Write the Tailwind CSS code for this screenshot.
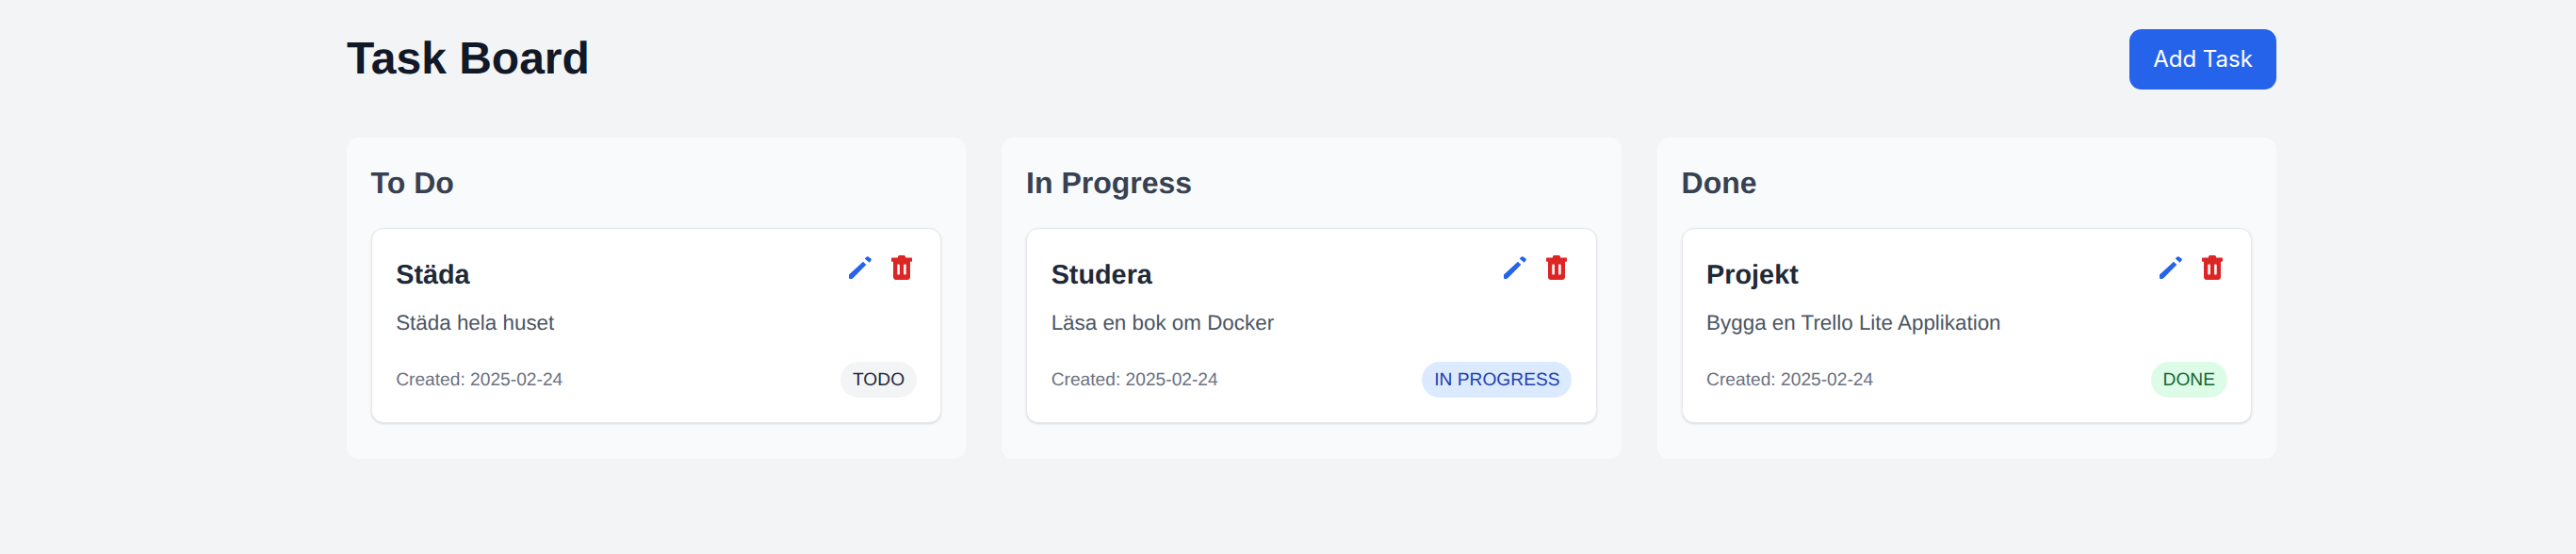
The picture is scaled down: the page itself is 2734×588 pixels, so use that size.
<!DOCTYPE html>
<html lang="sv">
<head>
  <meta charset="UTF-8" />
  <title>Task Board</title>
  <script src="https://cdn.jsdelivr.net/npm/@tailwindcss/browser@4"></script>
</head>
<body class="min-h-screen bg-[#f3f4f6] font-['Liberation_Sans',sans-serif] [text-rendering:geometricPrecision]">
  <div class="ml-[368px] w-[2048px] pt-[31px]">

    <!-- Header -->
    <header class="flex justify-between items-center h-16 mb-[51px]">
      <h1 class="text-[48px] leading-[56px] font-bold text-[#111827]">Task Board</h1>
      <button class="w-[156px] h-16 rounded-[12.8px] bg-[#2563eb] text-white text-[24px] font-['Inter',sans-serif]">Add Task</button>
    </header>

    <!-- Columns -->
    <main class="grid grid-cols-3 gap-[38.4px]">

      <section class="bg-[#f9fafb] rounded-[12.8px] p-[25.6px] pb-[38.4px]">
        <h2 class="text-[32px] leading-[44.8px] font-bold text-[#374151] mb-[25.6px]">To Do</h2>
        <article class="bg-white border border-[#e5e7eb] rounded-[12.8px] shadow-sm p-[25.6px]">
          <div class="flex justify-between items-start">
            <h3 class="text-[28.8px] leading-[44.8px] pt-[1px] font-bold text-[#1f2937]">Städa</h3>
            <div class="flex gap-[21px] pt-[2px] mr-[5px]">
              <svg class="w-[24px] h-[24px] mt-[1px] text-[#2563eb]" viewBox="0 0 24 24" fill="currentColor"><path d="M0 19.500 15 5.700 18.300 9 4.500 23Q3.800 24 2.500 24H1Q0 24 0 23Z" /><path d="M16.700 2.400 18.500.7Q19.500-.2 20.700.6L23.400 2.600Q24.300 3.500 23.400 4.600L21.700 6.700Z" /></svg>
              <svg class="w-[22px] h-[26px] text-[#dc2626]" viewBox="0 0 22 26" fill="currentColor"><path fill-rule="evenodd" d="M8.500 0h5c.9 0 1.500.8 1.700 2.400H21c.6 0 1 .4 1 1V6c0 .4-.3.7-.7.700H20V23c0 1.700-1.300 3-3 3H5c-1.700 0-3-1.300-3-3V6.700H.7C.3 6.700 0 6.400 0 6V3.400c0-.6.4-1 1-1h5.800C7 .8 7.600 0 8.500 0ZM7.300 9.500c-.6 0-1 .4-1 1V19.500c0 .6.4 1 1 1h.6c.6 0 1-.4 1-1V10.500c0-.6-.4-1-1-1h-.6Zm6.800 0c-.6 0-1 .4-1 1V19.500c0 .6.4 1 1 1h.6c.6 0 1-.4 1-1V10.500c0-.6-.4-1-1-1h-.6Z" /></svg>
            </div>
          </div>
          <p class="text-[22.4px] leading-[32px] text-[#4b5563] mt-[12.8px]">Städa hela huset</p>
          <div class="flex justify-between items-center mt-[24.6px]">
            <span class="text-[19.2px] pt-[3px] text-[#6b7280]">Created: 2025-02-24</span>
            <span class="h-[38.4px] flex items-center px-[12.8px] pt-[2px] rounded-full text-[19.2px] bg-[#f3f4f6] text-[#1f2937]">TODO</span>
          </div>
        </article>
      </section>

      <section class="bg-[#f9fafb] rounded-[12.8px] p-[25.6px] pb-[38.4px]">
        <h2 class="text-[32px] leading-[44.8px] font-bold text-[#374151] mb-[25.6px]">In Progress</h2>
        <article class="bg-white border border-[#e5e7eb] rounded-[12.8px] shadow-sm p-[25.6px]">
          <div class="flex justify-between items-start">
            <h3 class="text-[28.8px] leading-[44.8px] pt-[1px] font-bold text-[#1f2937]">Studera</h3>
            <div class="flex gap-[21px] pt-[2px] mr-[5px]">
              <svg class="w-[24px] h-[24px] mt-[1px] text-[#2563eb]" viewBox="0 0 24 24" fill="currentColor"><path d="M0 19.500 15 5.700 18.300 9 4.500 23Q3.800 24 2.500 24H1Q0 24 0 23Z" /><path d="M16.700 2.400 18.500.7Q19.500-.2 20.700.6L23.400 2.600Q24.300 3.500 23.400 4.600L21.700 6.700Z" /></svg>
              <svg class="w-[22px] h-[26px] text-[#dc2626]" viewBox="0 0 22 26" fill="currentColor"><path fill-rule="evenodd" d="M8.500 0h5c.9 0 1.500.8 1.700 2.400H21c.6 0 1 .4 1 1V6c0 .4-.3.7-.7.700H20V23c0 1.700-1.300 3-3 3H5c-1.700 0-3-1.300-3-3V6.700H.7C.3 6.700 0 6.400 0 6V3.400c0-.6.4-1 1-1h5.800C7 .8 7.600 0 8.500 0ZM7.300 9.500c-.6 0-1 .4-1 1V19.500c0 .6.4 1 1 1h.6c.6 0 1-.4 1-1V10.500c0-.6-.4-1-1-1h-.6Zm6.800 0c-.6 0-1 .4-1 1V19.500c0 .6.4 1 1 1h.6c.6 0 1-.4 1-1V10.500c0-.6-.4-1-1-1h-.6Z" /></svg>
            </div>
          </div>
          <p class="text-[22.4px] leading-[32px] text-[#4b5563] mt-[12.8px]">Läsa en bok om Docker</p>
          <div class="flex justify-between items-center mt-[24.6px]">
            <span class="text-[19.2px] pt-[3px] text-[#6b7280]">Created: 2025-02-24</span>
            <span class="h-[38.4px] flex items-center px-[12.8px] pt-[2px] rounded-full text-[19.2px] bg-[#dbeafe] text-[#1e40af]">IN PROGRESS</span>
          </div>
        </article>
      </section>

      <section class="bg-[#f9fafb] rounded-[12.8px] p-[25.6px] pb-[38.4px]">
        <h2 class="text-[32px] leading-[44.8px] font-bold text-[#374151] mb-[25.6px]">Done</h2>
        <article class="bg-white border border-[#e5e7eb] rounded-[12.8px] shadow-sm p-[25.6px]">
          <div class="flex justify-between items-start">
            <h3 class="text-[28.8px] leading-[44.8px] pt-[1px] font-bold text-[#1f2937]">Projekt</h3>
            <div class="flex gap-[21px] pt-[2px] mr-[5px]">
              <svg class="w-[24px] h-[24px] mt-[1px] text-[#2563eb]" viewBox="0 0 24 24" fill="currentColor"><path d="M0 19.500 15 5.700 18.300 9 4.500 23Q3.800 24 2.500 24H1Q0 24 0 23Z" /><path d="M16.700 2.400 18.500.7Q19.500-.2 20.700.6L23.400 2.600Q24.300 3.500 23.400 4.600L21.700 6.700Z" /></svg>
              <svg class="w-[22px] h-[26px] text-[#dc2626]" viewBox="0 0 22 26" fill="currentColor"><path fill-rule="evenodd" d="M8.500 0h5c.9 0 1.500.8 1.700 2.400H21c.6 0 1 .4 1 1V6c0 .4-.3.7-.7.700H20V23c0 1.700-1.300 3-3 3H5c-1.700 0-3-1.300-3-3V6.700H.7C.3 6.700 0 6.400 0 6V3.400c0-.6.4-1 1-1h5.800C7 .8 7.600 0 8.500 0ZM7.300 9.500c-.6 0-1 .4-1 1V19.500c0 .6.4 1 1 1h.6c.6 0 1-.4 1-1V10.500c0-.6-.4-1-1-1h-.6Zm6.800 0c-.6 0-1 .4-1 1V19.500c0 .6.4 1 1 1h.6c.6 0 1-.4 1-1V10.500c0-.6-.4-1-1-1h-.6Z" /></svg>
            </div>
          </div>
          <p class="text-[22.4px] leading-[32px] text-[#4b5563] mt-[12.8px]">Bygga en Trello Lite Applikation</p>
          <div class="flex justify-between items-center mt-[24.6px]">
            <span class="text-[19.2px] pt-[3px] text-[#6b7280]">Created: 2025-02-24</span>
            <span class="h-[38.4px] flex items-center px-[12.8px] pt-[2px] rounded-full text-[19.2px] bg-[#dcfce7] text-[#166534]">DONE</span>
          </div>
        </article>
      </section>

    </main>
  </div>
</body>
</html>
